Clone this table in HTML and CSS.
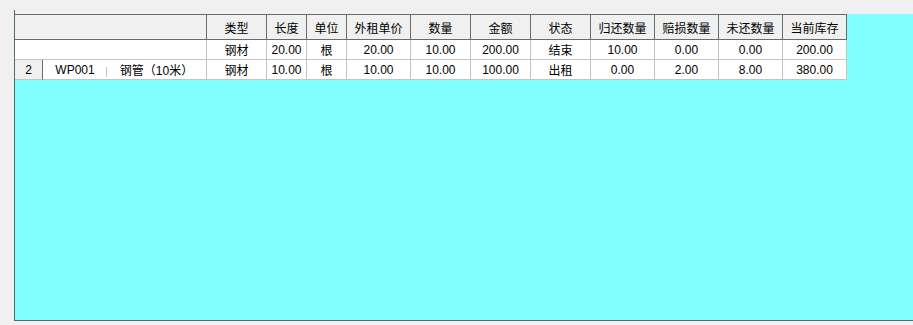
FILE: index.html
```html
<!DOCTYPE html>
<html>
<head>
    <title>出租明细</title>
    <meta charset="UTF-8">
    <link rel="stylesheet" href="styles.css">
</head>
<body>
    <div class="frame">
        <div class="grid-area">
            <div class="grid">
                <div class="cell head span3"></div>
                <div class="cell head">类型</div>
                <div class="cell head">长度</div>
                <div class="cell head">单位</div>
                <div class="cell head">外租单价</div>
                <div class="cell head">数量</div>
                <div class="cell head">金额</div>
                <div class="cell head">状态</div>
                <div class="cell head">归还数量</div>
                <div class="cell head">赔损数量</div>
                <div class="cell head">未还数量</div>
                <div class="cell head">当前库存</div>

                <div class="cell span3"></div>
                <div class="cell">钢材</div>
                <div class="cell">20.00</div>
                <div class="cell">根</div>
                <div class="cell">20.00</div>
                <div class="cell">10.00</div>
                <div class="cell">200.00</div>
                <div class="cell">结束</div>
                <div class="cell">10.00</div>
                <div class="cell">0.00</div>
                <div class="cell">0.00</div>
                <div class="cell">200.00</div>

                <div class="cell rownum">2</div>
                <div class="cell code">WP001</div>
                <div class="cell">钢管（10米）</div>
                <div class="cell">钢材</div>
                <div class="cell">10.00</div>
                <div class="cell">根</div>
                <div class="cell">10.00</div>
                <div class="cell">10.00</div>
                <div class="cell">100.00</div>
                <div class="cell">出租</div>
                <div class="cell">0.00</div>
                <div class="cell">2.00</div>
                <div class="cell">8.00</div>
                <div class="cell">380.00</div>
            </div>
        </div>
    </div>
</body>
</html>
```

FILE: styles.css
```css
body {
    margin: 0;
    background-color: #F0F0F0;
    font-family: "Liberation Sans", "Noto Sans CJK SC", sans-serif;
    font-size: 12px;
    color: #000000;
}

.frame {
    margin: 10px 0 0 14px;
    height: 311px;
    padding-top: 4px;
    box-sizing: border-box;
    border-left: 1px solid #55696A;
    border-bottom: 1px solid #55696A;
}

.grid-area {
    height: 306px;
    background-color: #80FFFF;
}

.grid {
    display: grid;
    grid-template-columns: 28px 64px 100px 60px 40px 40px 64px 60px 60px 60px 64px 64px 64px 64px;
    grid-template-rows: 26px 20px 20px;
    width: 832px;
}

.cell {
    box-sizing: border-box;
    display: flex;
    align-items: center;
    justify-content: center;
    background-color: #FFFFFF;
    border-right: 1px solid #C4C4C4;
    border-bottom: 1px solid #C4C4C4;
    white-space: nowrap;
    position: relative;
}

.span3 {
    grid-column: span 3;
}

.head {
    background-color: #F0F0F0;
    border-top: 1px solid #6B6B6B;
    border-right-color: #6B6B6B;
    border-bottom-color: #6B6B6B;
}

.rownum {
    background-color: #F0F0F0;
    border-right-color: #6B6B6B;
}

/* the code column only shows a short divider */
.code {
    border-right: none;
}

.code::after {
    content: "";
    position: absolute;
    right: 0;
    top: 7px;
    height: 10px;
    border-right: 1px solid #C4C4C4;
}
```
